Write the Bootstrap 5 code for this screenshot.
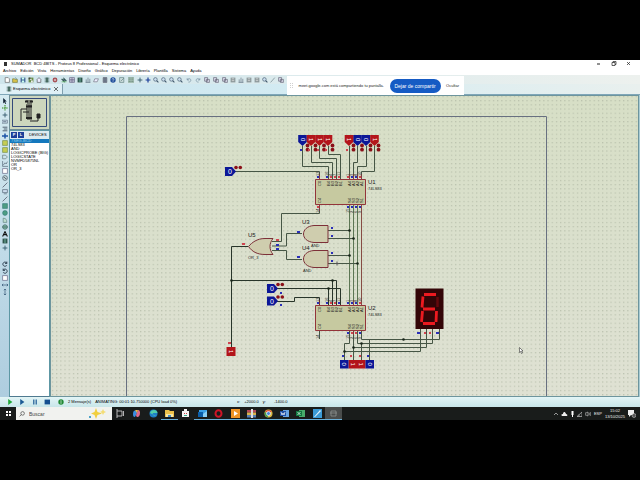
<!DOCTYPE html>
<html lang="es">
<head>
<meta charset="utf-8">
<meta name="viewport" content="width=device-width, initial-scale=1">
<title>SUMADOR BCD 4BITS - Proteus 8 Professional</title>
<link href="https://cdn.jsdelivr.net/npm/bootstrap@5.3.0/dist/css/bootstrap.min.css" rel="stylesheet">
<style>
body{background:#000;font-family:"Liberation Sans",Arial,sans-serif;font-size:4px;line-height:6px;color:#000}
.screen{min-height:100vh;padding:60px 0}
button{border:0;background:none;padding:0;color:inherit;font:inherit;line-height:inherit}
a{color:inherit;text-decoration:none}
svg{display:block;flex:none}
.ic{width:6px;height:6px}
.titlebar{background:#fff;height:7px}
.menubar{background:#fff;height:8px;padding-left:3px;gap:4px}
.toolbar{background:linear-gradient(90deg,#cfe5ec,#ddebed 50%,#edf1ee);height:9px;padding-left:3px}
.tabs{background:linear-gradient(90deg,#c9e3ee,#d3ebf2 45%,#e9f0ee);height:11px;border-bottom:1px solid #7fa6b8}
.doc-tab{background:#dff0f6;border-right:1px solid #7f9fae;width:63px;padding-left:6px;padding-right:4px;gap:1px;white-space:nowrap}
.main{background:#a9cbd3}
.strip{width:9px;background:linear-gradient(#d5eaf1,#aecddf);padding-top:3px;gap:1px}
.strip button{height:6px}
.strip .space{height:8px}
.side{width:41px}
.overview{height:35px;background:#cdd6bd;border:1px solid #6e8d96;padding:2px}
.devices{background:#fff;border:1px solid #5d97a4;border-bottom-color:#4f7a90}
.dev-head{background:#dcebf0;height:8px;padding-left:1px;gap:1px;white-space:nowrap}
.pl{background:#1b3f9a;color:#fff;width:6px;height:6px;font-weight:700;text-align:center}
.devices li{line-height:4px;padding-left:1px;white-space:nowrap}
.devices li.sel{background:#1478bd;color:#9ad0ee}
.sheet{background:linear-gradient(#d7dfc6,#dbe0ce 60%,#dfe1d3);border:1px solid #6d959d;margin-right:1px}
.status{background:linear-gradient(#e3f5f6,#c8e6e9);height:10px}
.play{width:50px;padding-left:7px}
.coords{margin-left:60px}
.taskbar{background:#191c1b;height:13px;color:#eee}
.find{width:96px;height:13px;background:#f1f2ef;color:#444;padding:0 3px;gap:4px}
.find input{font-size:5px;line-height:6px;width:40px;border:0;background:none;padding:0;color:#444}
.find input::placeholder{color:#444;opacity:1}
.start{width:16px}
.tasks{width:230px}
.task{height:13px;border-bottom:1px solid transparent}
.task.on{border-bottom-color:#6ab0d8}
.task.cur{background:#4a4d4c}
.task svg{width:9px;height:9px}
.share{position:absolute;left:287px;top:16px;width:177px;height:19px;background:#fff;color:#222;padding:0 5px 0 3px;line-height:6px}
.share .stop{background:#155bc4;color:#fff;font-size:5px;border-radius:7px;width:51px;height:14px}
.tray{gap:3px}
.clock{text-align:center}
</style>
</head>
<body>
<svg width="0" height="0" class="position-absolute" aria-hidden="true">
<defs>
<g id="i-new"><path d="M2 1h5l2 2v6H2z" fill="#fff" stroke="#555"/></g>
<g id="i-open"><path d="M1 3h3l1 1h4v5H1z" fill="#d8c24a" stroke="#6a7238"/><path d="M5 1l3 2" stroke="#477"/></g>
<g id="i-save"><path d="M1 1h8v8H1z" fill="#3b5d94"/><path d="M3 1h4v3H3zM3 6h4v3H3z" fill="#cfe"/></g>
<g id="i-db"><path d="M1 1h8v8H1z" fill="#6b8f4c"/><path d="M3 3h3v2H3zM5 6h3v3H5z" fill="#eee"/><path d="M1 1h3v3H1z" fill="#444"/></g>
<g id="i-home"><path d="M1 5l4-4 4 4M2 5v4h6V5" fill="#eef" stroke="#444"/></g>
<g id="i-chip"><path d="M3 1h4v8H3z" fill="#577a6b"/><path d="M1 2h8M1 5h8M1 8h8" stroke="#355"/></g>
<g id="i-round"><circle cx="5" cy="5" r="4" fill="#a34a50"/><path d="M3 5h4M5 3v4" stroke="#fff"/></g>
<g id="i-arr"><path d="M1 3l4 4V3l4 4" fill="none" stroke="#355" stroke-width="2"/><path d="M1 8h8" stroke="#4a4"/></g>
<g id="i-table"><path d="M1 1h8v8H1zM1 4h8M1 6.5h8M5 1v8" fill="#dde" stroke="#557"/></g>
<g id="i-dark"><path d="M1 1h8v8H1z" fill="#284d44"/><path d="M3 3h4M3 5h4M3 7h4" stroke="#8cb"/></g>
<g id="i-bars"><path d="M1 9h8M2 9V4M5 9V1M8 9V3" stroke="#567" fill="none"/></g>
<g id="i-fold"><path d="M1 8l2-5h6L7 8z" fill="#eef" stroke="#667"/></g>
<g id="i-doc"><path d="M2 1h6v8H2z" fill="#9ab" stroke="#445"/><path d="M3 3h4M3 5h4M3 7h4" stroke="#334"/></g>
<g id="i-help"><circle cx="5" cy="5" r="4.5" fill="#214f9c"/><path d="M3.5 4c0-2 3-2 3 0 0 1-1.5 1-1.5 2.200M5 7v1" fill="none" stroke="#fff"/></g>
<g id="i-draw"><path d="M1 1h7v8H1zM3 7l5-5" fill="#cdd" stroke="#577"/></g>
<g id="i-grid"><path d="M0 0h10v10H0z" fill="#a9c3b8"/><path d="M2 1v8M5 1v8M8 1v8" stroke="#243" stroke-dasharray="1.500 1.500"/></g>
<g id="i-plus"><path d="M5 1v8M1 5h8" stroke="#345a6b" stroke-width="1.500"/></g>
<g id="i-bplus"><path d="M5 1v8M1 5h8" stroke="#1b3f9a" stroke-width="2"/></g>
<g id="i-zoom"><circle cx="4" cy="4" r="3" fill="#cde" stroke="#3c5468"/><path d="M6 6l3 3" stroke="#3c5468" stroke-width="1.800"/></g>
<g id="i-undo"><path d="M2 2v3h3M2 5c2-4 7-2 6 1-.5 2-2 2.500-4 2.500" fill="none" stroke="#7e97a8" stroke-width="1.300"/></g>
<g id="i-redo"><path d="M8 2v3H5M8 5C6 1 1 3 2 6c.5 2 2 2.500 4 2.500" fill="none" stroke="#7e97a8" stroke-width="1.300"/></g>
<g id="i-cut"><path d="M1 1h5v6H1zM4 4h5v5H4z" fill="#dde" stroke="#556"/></g>
<g id="i-block"><path d="M1 1h8v8H1z" fill="#8e9a9c"/><path d="M3 3h4M3 6h4" stroke="#eee"/></g>
<g id="i-pen"><path d="M1 9L8 1" stroke="#8a9ca3" stroke-width="1.500"/></g>
<g id="i-ptr"><path d="M2 0l6 6H5l2 3-1.500 1L4 7 2 9z" fill="#123"/></g>
<g id="i-gplus"><path d="M5 0v10M0 5h10" stroke="#63a85a" stroke-width="2.500" stroke-dasharray="2 1"/></g>
<g id="i-lbl"><path d="M0 2h9v5H0z" fill="#cde" stroke="#567"/><path d="M2 4.500h5" stroke="#345"/></g>
<g id="i-lines"><path d="M1 2h8M3 5h6M1 8h8" stroke="#456" stroke-width="1.500"/></g>
<g id="i-bus"><path d="M0 5h10M5 1v8" stroke="#1c54a7" stroke-width="2.500"/></g>
<g id="i-ybox"><path d="M1 1h8v8H1z" fill="#c5cd54" stroke="#69843c"/></g>
<g id="i-term"><path d="M1 2h5l3 3-3 3H1z" fill="none" stroke="#566"/></g>
<g id="i-graph"><path d="M1 0v9h9M2 7l3-4 2 2 2-4" fill="none" stroke="#456"/></g>
<g id="i-box"><path d="M1 1h8v8H1z" fill="#fff" stroke="#557"/></g>
<g id="i-gen"><circle cx="5" cy="5" r="4" fill="#cdd" stroke="#345"/><path d="M3 5q1-3 2 0t2 0" fill="none" stroke="#234"/></g>
<g id="i-line"><path d="M1 9L9 1" stroke="#334"/></g>
<g id="i-inst"><path d="M1 1h8v5H1zM3 8h5" fill="#cde" stroke="#456"/></g>
<g id="i-sq"><path d="M1 1h8v8H1z" fill="#4d9d83" stroke="#377"/></g>
<g id="i-circ"><circle cx="5" cy="5" r="4" fill="#4d9d83" stroke="#377"/></g>
<g id="i-arc"><path d="M2 2c5 0 6 3 6 7H2z" fill="#bddecf" stroke="#577"/></g>
<g id="i-inf"><path d="M1 5c0-5 8-5 8 0s-8 5-8 0M1 5h8" fill="#7cb3a2" stroke="#355"/></g>
<g id="i-a"><path d="M1 9l4-8 4 8M3 6h4" fill="none" stroke="#111" stroke-width="1.800"/></g>
<g id="i-updn"><path d="M5 0v10M3 2l2-2 2 2M3 8l2 2 2-2" fill="none" stroke="#246"/></g>
<g id="i-lr"><path d="M0 5h10M2 3L0 5l2 2M8 3l2 2-2 2" fill="none" stroke="#246"/></g>
<g id="i-cw"><path d="M8 1v3H5M8 4C6 0 1 2 1.500 6 3 10 7 9 8 7" fill="none" stroke="#234" stroke-width="1.500"/></g>
<g id="i-ccw"><path d="M2 1v3h3M2 4c2-4 7-2 6.500 2C7 10 3 9 2 7" fill="none" stroke="#234" stroke-width="1.500"/></g>

<pattern id="dots" x="51" y="95" width="4.200" height="4.200" patternUnits="userSpaceOnUse"><rect x="1" y="1" width="1" height="1" fill="#abb39f"/></pattern>
<path id="tip" d="M-4.300 0h8.600v7L0 11l-4.300-4z"/>
<g id="pair"><circle cx="4" cy="0" r="1.900"/><circle cx="4" cy="4.200" r="1.900"/></g>
<path id="andg" d="M25 0v17H11C-3 16-3 1 11 0z" fill="#cfcdae" stroke="#7d3038"/>
<g id="src"><path d="M0-4.500h7l4 4.500-4 4.500H0z" fill="#0c1797"/><g fill="#8b1018"><circle cx="11" cy="-4" r="1.800"/><circle cx="15.300" cy="-4" r="1.800"/></g><text x="3" y="2.500" font-size="7" fill="#fff">0</text></g>
</defs>
</svg>

<div class="screen d-flex flex-column">
<div class="position-relative flex-grow-1 d-flex flex-column">
<header>
  <div class="titlebar d-flex align-items-center justify-content-between">
    <div class="d-flex align-items-center gap-1 ps-1"><svg width="3" height="4" viewBox="0 0 3 4"><path d="M0 0h3v4H0z" fill="#333"/></svg><span>SUMADOR&nbsp; BCD 4BITS - Proteus 8 Professional - Esquema electrónico</span></div>
    <div class="d-flex pe-1">
      <button aria-label="Minimizar" class="px-1"><svg width="7" height="5" viewBox="0 0 7 5"><path d="M2 3h3" stroke="#222"/></svg></button>
      <button aria-label="Restaurar" class="px-1"><svg width="7" height="5" viewBox="0 0 7 5"><path d="M2 1.500h3v3H2zM3 1.500V.5h3v3H5" fill="none" stroke="#222" stroke-width=".7"/></svg></button>
      <button aria-label="Cerrar" class="px-1"><svg width="7" height="5" viewBox="0 0 7 5"><path d="M2 1l3 3M5 1L2 4" stroke="#222" stroke-width=".7"/></svg></button>
    </div>
  </div>
  <nav class="menubar d-flex align-items-center">
    <a href="#">Archivo</a><a href="#">Edición</a><a href="#">Vista</a><a href="#">Herramientas</a><a href="#">Diseño</a><a href="#">Gráfico</a><a href="#">Depuración</a><a href="#">Librería</a><a href="#">Plantilla</a><a href="#">Sistema</a><a href="#">Ayuda</a>
  </nav>
  <div class="toolbar d-flex align-items-center" id="toolbar"></div>
  <div class="tabs d-flex">
    <div class="doc-tab d-flex align-items-center"><svg class="ic" viewBox="0 0 10 10"><use href="#i-chip"/></svg><span class="flex-grow-1">Esquema electrónico</span><button aria-label="Cerrar pestaña"><svg width="4" height="4" viewBox="0 0 4 4"><path d="M0 0l4 4M4 0L0 4" stroke="#333" stroke-width=".7"/></svg></button></div>
  </div>
</header>

<main class="main d-flex flex-grow-1">
  <div class="strip d-flex flex-column align-items-center" id="strip"></div>
  <aside class="side d-flex flex-column">
    <div class="overview"><svg width="35" height="29" viewBox="0 0 35 29"><path d="M.5.5h34v28H.5z" fill="none" stroke="#34497a"/><g fill="none" stroke="#222"><path d="M14 3h6M15 5h5M14 7h6M15 9v11M17 7v14M19 7v14M9 11h6M9 11v12M11 14h6M15 21h5M18 23h8M26 17v6" stroke-width="1"/><path d="M13 3.500h3M18 3.500h3M14 8.500h6M14 20h6" stroke-width="2"/><path d="M25 16h3v4h-3z" fill="#222"/></g></svg></div>
    <div class="devices flex-grow-1">
      <div class="dev-head d-flex align-items-center"><button class="pl">P</button><button class="pl">L</button><span class="ps-1">DEVICES</span></div>
      <ul class="list-unstyled m-0"><li class="sel">7SEG-BCD</li><li>74LS83</li><li>AND</li><li>LOGICPROBE (BIG)</li><li>LOGICSTATE</li><li>NVMFD5875NL</li><li>OR</li><li>OR_3</li></ul>
    </div>
  </aside>
  <section class="sheet flex-grow-1" aria-label="Esquema">
  <svg class="w-100" viewBox="51 96 587 300" preserveAspectRatio="xMinYMin meet" font-size="5" fill="#222">
    <path d="M51 95h587v302H51z" fill="url(#dots)"/>
    <path d="M126.500 398V116.500h420V398" fill="none" stroke="#687080"/>
    <!-- wires -->
    <g fill="none" stroke="#465645">
      <path d="M302.500 146v20.500h26V179M311.500 146v16.500h21V179M319.500 146v12.500h17V179M328.500 146v8.500h12V179M349.500 146v33M357.500 146v16.500h-4V179M366.500 146v20.500h-9V179M374.500 146v25.500h-13V179"/>
      <path d="M234 171.500h85.500v8M319.500 205v8.500h-38v28H272"/>
      <path d="M349.500 205v100M353.500 205v100M357.500 205v100M361.500 205v100" stroke="#5c7654"/>
      <path d="M302 233.500h-15.500v12.500H272M302 259.500h-15.500v-9H272M328 230.500h21M328 238.500h25M328 255.500h21M328 263.500h29"/>
      <path d="M248 246.500h-16.500V347M231.500 280.500h105V305M332.500 280.500V305M277 288.500h63.500V305M328.500 288.500V305M277 301.500h17.500v-4h25v8" stroke="#28352a"/>
      <path d="M319.500 331v8M349.500 331v12.500h-5V360M353.500 331v29M357.500 331v12.500H432.500V329M361.500 343.500V360M361.500 331v8.500H439.500V329M369.500 339.500V360M353.500 347.500H426.500V329M344.500 351.500H420.500V329"/>
    </g>
    <g stroke="#a33038"><path d="M319.500 174v5M349.500 174v5M353.500 174v5M357.500 174v5M361.500 174v5M319.500 205v6M361.500 205v100M319.500 300v5M353.500 300v5M353.500 331v4" opacity=".6"/></g>
    <g fill="#182418"><circle cx="349.500" cy="230.500" r="1.300"/><circle cx="353.500" cy="238.500" r="1.300"/><circle cx="349.500" cy="255.500" r="1.300"/><circle cx="357.500" cy="263.500" r="1.300"/><circle cx="231.500" cy="280.500" r="1.300"/><circle cx="332.500" cy="280.500" r="1.300"/><circle cx="328.500" cy="288.500" r="1.300"/><circle cx="403.500" cy="339.500" r="1.300"/><circle cx="361.500" cy="343.500" r="1.300"/><circle cx="353.500" cy="347.500" r="1.300"/><circle cx="344.500" cy="351.500" r="1.300"/></g>
    <!-- logic inputs -->
    <g fill="#0c1797"><use href="#tip" x="302.500" y="135"/><use href="#tip" x="357.500" y="135"/><use href="#tip" x="366" y="135"/></g>
    <g fill="#b3151b"><use href="#tip" x="311" y="135"/><use href="#tip" x="319.500" y="135"/><use href="#tip" x="328" y="135"/><use href="#tip" x="349" y="135"/><use href="#tip" x="374.500" y="135"/></g>
    <g fill="#8b1018"><use href="#pair" x="303.500" y="145.500"/><use href="#pair" x="311.500" y="145.500"/><use href="#pair" x="320" y="145.500"/><use href="#pair" x="328.500" y="145.500"/><use href="#pair" x="349.500" y="145.500"/><use href="#pair" x="358" y="145.500"/><use href="#pair" x="366.500" y="145.500"/><use href="#pair" x="374.500" y="145.500"/></g>
    <g fill="#fff" font-size="6">
      <text transform="translate(300.500 138)rotate(90)">0</text><text transform="translate(309 138)rotate(90)">1</text><text transform="translate(317.500 138)rotate(90)">1</text><text transform="translate(326 138)rotate(90)">1</text>
      <text transform="translate(347 138)rotate(90)">1</text><text transform="translate(355.500 138)rotate(90)">0</text><text transform="translate(364 138)rotate(90)">0</text><text transform="translate(372.500 138)rotate(90)">1</text>
    </g>
    <use href="#src" x="225" y="171.500"/><use href="#src" x="267" y="288.500"/><use href="#src" x="267" y="301"/>
    <!-- adders -->
    <g fill="#c6c9a0" stroke="#93343a"><path d="M315.500 179.500h50v25h-50zM315.500 305.500h50v25h-50z"/></g>
    <g id="adder" font-size="4" fill="#222">
      <text transform="translate(321 186)rotate(-90)">C0</text><text transform="translate(330 186)rotate(-90)">B4</text><text transform="translate(334 186)rotate(-90)">B3</text><text transform="translate(338 186)rotate(-90)">B2</text><text transform="translate(342 186)rotate(-90)">B1</text><text transform="translate(351 186)rotate(-90)">A4</text><text transform="translate(355 186)rotate(-90)">A3</text><text transform="translate(359 186)rotate(-90)">A2</text><text transform="translate(363 186)rotate(-90)">A1</text>
      <text transform="translate(321 203)rotate(-90)">C4</text><text transform="translate(351 203)rotate(-90)">S4</text><text transform="translate(355 203)rotate(-90)">S3</text><text transform="translate(359 203)rotate(-90)">S2</text><text transform="translate(363 203)rotate(-90)">S1</text>
      <text transform="translate(319 176)rotate(-90)">13</text><text transform="translate(328 176)rotate(-90)">16</text><text transform="translate(332 176)rotate(-90)">4</text><text transform="translate(336 176)rotate(-90)">7</text><text transform="translate(340 176)rotate(-90)">11</text><text transform="translate(349 176)rotate(-90)">1</text><text transform="translate(353 176)rotate(-90)">3</text><text transform="translate(357 176)rotate(-90)">8</text><text transform="translate(361 176)rotate(-90)">10</text>
      <text transform="translate(319 213)rotate(-90)">14</text><text transform="translate(349 213)rotate(-90)">15</text><text transform="translate(353 213)rotate(-90)">2</text><text transform="translate(357 213)rotate(-90)">6</text><text transform="translate(361 213)rotate(-90)">9</text>
    </g>
    <use href="#adder" y="126"/>
    <!-- gates -->
    <use href="#andg" x="303" y="225.500"/><use href="#andg" x="303" y="250.500"/>
    <path d="M273 238.500h-8c-8 0-13 4-16.500 8 3.500 5 8.500 8 16.500 8h8c-4-5-4-11 0-16z" fill="#cfcdae" stroke="#7d3038"/>
    <g font-size="6"><text x="368" y="184">U1</text><text x="368" y="310">U2</text><text x="302" y="224">U3</text><text x="302" y="250">U4</text><text x="248" y="237">U5</text></g>
    <g font-size="4"><text x="368" y="190">74LS83</text><text x="368" y="316">74LS83</text><text x="311" y="247">AND</text><text x="303" y="272">AND</text><text x="248" y="259">OR_3</text></g>
    <!-- pin states -->
    <g fill="none" stroke-width="2">
      <path stroke="#2a2fb8" d="M300 150h2M297 232h3M297 257h3M331 228h2M331 236h2M331 253h2M331 261h2M276 245h3M276 249h3M317 177h2M326 177h2M351 177h2M355 177h2M347 207h2M351 207h2M355 207h2M359 207h2M317 303h2M326 303h2M347 303h2M351 303h2M355 303h2M338 303h2M417 333h3M436 333h3M342 356h2M367 356h2M347 333h2M359 333h2M280 293h2M280 305h2"/>
      <path stroke="#d04450" d="M308 150h2M317 150h2M325 150h2M346 150h2M242 244h3M276 240h3M330 177h2M334 177h2M338 177h2M347 177h2M359 177h2M330 303h2M334 303h2M359 303h2M351 333h2M355 333h2M424 333h2M429 333h2M350 356h2M359 356h2M228 343h3M317 207h2"/>
    </g>
    <!-- probes -->
    <path d="M226.500 347h9v9h-9zM348.500 360h17v8.500h-17z" fill="#b3151b"/>
    <path d="M340 360h8.500v8.500H340zM365.500 360h8.500v8.500h-8.500z" fill="#0c1797"/>
    <g fill="#fff" font-size="6"><text transform="translate(229 350)rotate(90)">1</text><text transform="translate(342 362.500)rotate(90)">0</text><text transform="translate(350.500 362.500)rotate(90)">1</text><text transform="translate(359 362.500)rotate(90)">1</text><text transform="translate(367.500 362.500)rotate(90)">0</text></g>
    <!-- seven segment display -->
    <path d="M415.500 288.500h28V329h-28z" fill="#330507"/>
    <path d="M437.500 297v10" stroke="#64090d" stroke-width="2.500"/>
    <path d="M424 294.500h12M423 296.500l-1 11M423 309h12M422.500 311l-1 11M436.500 311l-.5 11M423 323.500h12" stroke="#ec1a20" stroke-width="2.800" fill="none"/>
    <path d="M337 261.500v4M335 263.500h4" stroke="#555"/>
    <path d="M519.500 347.500v5l1-1 1 2 1-.5-1-2h1.500z" fill="#fff" stroke="#333" stroke-width=".6"/>
  </svg>
  </section>
</main>

<div class="status d-flex align-items-center">
  <div class="play d-flex align-items-center justify-content-between">
    <button aria-label="Ejecutar"><svg class="ic" viewBox="0 0 10 10"><path d="M2 0l7 5-7 5z" fill="#21a83a"/></svg></button>
    <button aria-label="Paso"><svg class="ic" viewBox="0 0 10 10"><path d="M2 0l7 5-7 5z" fill="#1c5b95"/></svg></button>
    <button aria-label="Pausa"><svg class="ic" viewBox="0 0 10 10"><path d="M2 1h2v8H2zM6 1h2v8H6z" fill="#1c5b95"/></svg></button>
    <button aria-label="Detener"><svg class="ic" viewBox="0 0 10 10"><path d="M1 1h9v8H1z" fill="#154f90"/></svg></button>
  </div>
  <div class="d-flex align-items-center gap-1 ps-2"><svg class="ic" viewBox="0 0 10 10"><circle cx="5" cy="5" r="4.500" fill="#228a35"/><path d="M5 2v6" stroke="#fff"/></svg><span>2 Mensaje(s)</span></div>
  <span class="ps-1">ANIMATING: 00:01:10.750000 (CPU load 0%)</span>
  <div class="coords d-flex gap-1"><span>x:</span><span>+2000.0</span><span>y:</span><span class="ps-1">-1400.0</span></div>
</div>
<footer class="taskbar d-flex align-items-center">
  <button class="task start" aria-label="Inicio"><svg class="m-auto" viewBox="0 0 9 9"><path d="M2 2h2v2H2zM5 2h2v2H5zM2 5h2v2H2zM5 5h2v2H5z" fill="#fff"/></svg></button>
  <label class="find d-flex align-items-center"><svg class="ic" viewBox="0 0 10 10"><circle cx="6" cy="4" r="3" fill="none" stroke="#333"/><path d="M4 6L1 9" stroke="#333"/></svg><input type="text" placeholder="Buscar" aria-label="Buscar"><svg class="ms-auto" width="22" height="11" viewBox="0 0 22 11"><path d="M9 0l1.500 4L15 5.500 10.500 7 9 11 7.500 7 4 5.500 7.500 4z" fill="#f1cf3e"/><path d="M16 1l1 2 2 1-2 1-1 2-1-2-2-1 2-1z" fill="#f4dd75"/><path d="M2 8h2v2H2z" fill="#4da4c8"/></svg></label>
  <div class="tasks d-flex" id="tasks"></div>
  <div class="tray ms-auto d-flex align-items-center pe-1">
    <svg width="4" height="4" viewBox="0 0 4 4"><path d="M0 3l2-2 2 2" fill="none" stroke="#ccc" stroke-width=".7"/></svg>
    <svg width="7" height="6" viewBox="0 0 7 6"><path d="M1 5h5c1-1 0-2-1-2C4 0 2 1 2 3 0 3 0 4 1 5" fill="#eee"/></svg>
    <svg width="3" height="6" viewBox="0 0 3 6"><path d="M.5 0h2v4h-2zM1 4h1v2H1z" fill="#fff"/></svg>
    <svg width="5" height="6" viewBox="0 0 5 6"><path d="M0 5.500L5 1v4.500zM2 3.500v2" fill="none" stroke="#bbb" stroke-width=".7"/></svg>
    <svg width="6" height="6" viewBox="0 0 6 6"><path d="M0 2h1l2-1v4L1 4H0zM4 2q1 1 0 2M5 1q2 2 0 4" fill="none" stroke="#ccc" stroke-width=".6"/></svg>
    <span>ESP</span>
    <div class="clock"><div>15:02</div><div>13/10/2025</div></div>
    <svg width="8" height="8" viewBox="0 0 8 8"><path d="M0 0h6v5H3L1 7V5H0z" fill="#eee"/><circle cx="6" cy="5.500" r="2" fill="#555" stroke="#ddd" stroke-width=".5"/></svg>
  </div>
</footer>

<div class="share d-flex align-items-center justify-content-between" role="status">
  <svg width="3" height="5" viewBox="0 0 3 5"><path d="M.5 0v5M2.500 0v5" stroke="#bbb" stroke-dasharray="1 1" stroke-width=".7"/></svg>
  <span>meet.google.com está compartiendo tu pantalla.</span>
  <button class="stop">Dejar de compartir</button>
  <button>Ocultar</button>
</div>
</div>
</div>
<script src="https://cdn.jsdelivr.net/npm/bootstrap@5.3.0/dist/js/bootstrap.bundle.min.js"></script>
<script>
const tool = n => `<button aria-label="${n}"><svg class="ic" viewBox="0 0 10 10"><use href="#i-${n}"/></svg></button>`;
const groups = [
  [32,'new open save db'],
  [82,'home chip round arr table dark bars fold doc help'],
  [27,'draw grid plus'],
  [40,'bplus zoom zoom zoom zoom'],
  [45,'undo redo cut cut cut'],
  [32,'block bars block block'],
  [24,'zoom pen cut']
];
document.getElementById('toolbar').innerHTML = groups.map(([w,s]) =>
  `<div class="d-flex justify-content-around" style="width:${w}px">${s.split(' ').map(tool).join('')}</div>`).join('');
document.getElementById('strip').innerHTML =
  'ptr gplus plus lbl lines bus ybox ybox term graph box gen line inst line sq circ arc inf a dark plus space cw ccw box lr updn'
  .split(' ').map(n => n === 'space' ? '<span class="space"></span>' : tool(n)).join('');
const apps = [
  ['Vista de tareas','','<path d="M1 2h5v5H1zM7.500 2v5M0 1h2M0 8h2" fill="none" stroke="#ddd" stroke-width=".8"/>'],
  ['Copilot','','<path d="M1 5c0-5 4-4 4-1L3 8C1 8 1 6 1 5" fill="#3a8ee0"/><path d="M8 4c0 5-4 5-4 2l2-5c2 0 2 2 2 3" fill="#e06a8a"/><path d="M3 1h3l-1 3z" fill="#e8b84a"/>'],
  ['Edge','','<circle cx="4.500" cy="4.500" r="4" fill="#1f7fc8"/><path d="M1 4c1-4 7-4 7.500 0H4c-1 2 1 3 3 3" fill="#52cfa9"/>'],
  ['Explorador','on','<path d="M0 1h4l1 1h4v6H0z" fill="#ecc14a"/><path d="M1 5h7v3H1z" fill="#f7e7a6"/><path d="M3 6h3v2H3z" fill="#4a8fc4"/>'],
  ['Store','','<path d="M1 2h7v6H1zM3 0h3v2H3z" fill="#f4f4f4"/><path d="M3 4h1v1H3zM5 4h1v1H5z" fill="#c44"/><path d="M3 6h3v1H3z" fill="#3a8"/>'],
  ['Outlook','on','<path d="M1 1h8v7H1z" fill="#3aa0e6"/><path d="M0 3h5v5H0z" fill="#0b5ea8"/><path d="M5 5l4-3v6H5z" fill="#8ad0f5"/>'],
  ['Opera','on','<ellipse cx="4.500" cy="4.500" rx="3" ry="3.300" fill="none" stroke="#cf1527" stroke-width="2"/>'],
  ['Reproductor','on','<path d="M0 0h9v9H0z" fill="#ee9426"/><path d="M3 2l4 2.500L3 7z" fill="#fff"/>'],
  ['WinRAR','on','<path d="M0 1h9v2.500H0z" fill="#b4495a"/><path d="M0 3.500h9V6H0z" fill="#d8b34c"/><path d="M0 6h9v2.500H0z" fill="#577fb2"/><path d="M4 0h2v9H4z" fill="#ddd"/>'],
  ['Chrome','on','<circle cx="4.500" cy="4.500" r="4" fill="#ddb942"/><path d="M1 3a4 4 0 017 0z" fill="#d9483b"/><path d="M1 3c-1 3 1 5 3 5.500L4 5z" fill="#3e9e55"/><circle cx="4.500" cy="4.500" r="2" fill="#4a86d8" stroke="#fff" stroke-width=".7"/>'],
  ['Word','on','<path d="M3 1h6v7H3z" fill="#6aa5e3"/><path d="M0 2h6v5H0z" fill="#1f4fa3"/><path d="M1 3l1 3 1-2 1 2 1-3" fill="none" stroke="#fff" stroke-width=".7"/>'],
  ['Excel','on','<path d="M3 1h6v7H3z" fill="#48ad6c"/><path d="M0 2h6v5H0z" fill="#117a40"/><path d="M1.500 3l3 3M4.500 3l-3 3" stroke="#fff" stroke-width=".7"/>'],
  ['Proteus','on','<path d="M0 0h9v9H0z" fill="#3b9bd6"/><path d="M1 8l6-7 1 1-6 6z" fill="#e6f4fb"/>'],
  ['ISIS','on cur','<path d="M2 2h5v5H2zM1 4h7" fill="none" stroke="#8d9290" stroke-width=".8"/>']
];
document.getElementById('tasks').innerHTML = apps.map(([n,c,p]) =>
  `<button class="task flex-fill ${c}" aria-label="${n}"><svg class="m-auto" viewBox="0 0 9 9">${p}</svg></button>`).join('');
</script>
</body>
</html>
